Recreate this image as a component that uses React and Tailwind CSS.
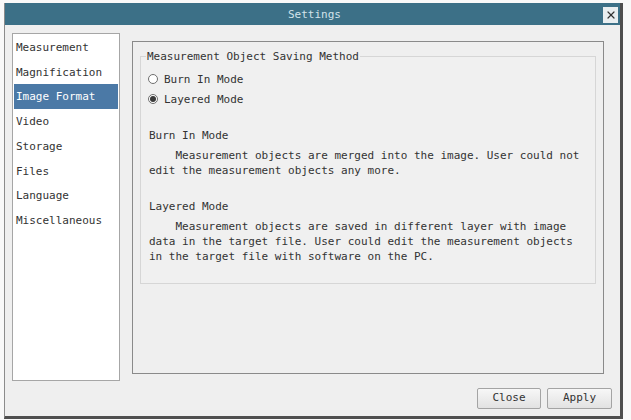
import React from "react";
import { X } from "lucide-react";

const MENU = [
  "Measurement",
  "Magnification",
  "Image Format",
  "Video",
  "Storage",
  "Files",
  "Language",
  "Miscellaneous",
];

function Radio({ checked, label }) {
  return (
    <label className="flex items-center h-[20px] gap-[6px]">
      <span className="w-[10px] h-[10px] rounded-full border border-[#6f6f6f] bg-white flex items-center justify-center">
        {checked && <span className="w-[6px] h-[6px] rounded-full bg-[#3a3a3a]" />}
      </span>
      <span>{label}</span>
    </label>
  );
}

function Btn({ children, w }) {
  return (
    <button
      type="button"
      className={`${w} h-[21px] rounded-[2px] border border-[#a4a4a4] bg-gradient-to-b from-[#f7f7f7] to-[#e2e2e2] text-[#333] text-[11px]`}
    >
      {children}
    </button>
  );
}

export default function App() {
  return (
    <div
      className="w-[631px] h-[420px] bg-[#f9f9f9] pt-[3px] pl-[4px] text-[11px] text-[#333]"
      style={{ fontFamily: '"DejaVu Sans Mono", "Liberation Mono", monospace' }}
    >
      <div className="w-[619px] h-[416px] flex flex-col border-l border-[#8c8c8c] border-r-[3px] border-b-[3px] border-r-[#4f4f4f] border-b-[#4f4f4f]">
        {/* title bar */}
        <div className="relative h-[22px] bg-[#3c7087] flex items-center justify-center">
          <span className="text-[#d3e3ea] text-[11px] pl-[4px] pt-[3px]">Settings</span>
          <div className="absolute right-[2px] top-[4px] w-[15px] h-[16px] bg-[#e9eef0] flex items-center justify-center">
            <X size={12} strokeWidth={2.4} className="text-[#333]" />
          </div>
        </div>

        {/* body */}
        <div className="flex-1 bg-[#efefef] pl-[7px] pt-[8px] flex flex-col">
          <div className="flex items-start">
            {/* menu list */}
            <div className="w-[108px] h-[348px] bg-white border border-[#a6a6a6] p-[1px]">
              {MENU.map((m) => (
                <div
                  key={m}
                  className={`h-[24.7px] flex items-center pl-[2px] pt-[2px] ${
                    m === "Image Format" ? "bg-[#4b79a6] text-white" : ""
                  }`}
                >
                  {m}
                </div>
              ))}
            </div>

            {/* content frame */}
            <div className="ml-[12px] mt-[8px] w-[472px] h-[333px] border border-[#8a8a8a] px-[7px]">
              <fieldset className="mt-[7px] w-[456px] h-[235px] border border-[#d6d6d6] bg-[#f0f0f0] px-[7px] leading-[15px]">
                <legend className="ml-[-2px] px-[1px] leading-[15px]">Measurement Object Saving Method</legend>
                <div className="pt-[5px]">
                  <Radio label="Burn In Mode" />
                  <Radio checked label="Layered Mode" />
                </div>
                <div className="pl-[1px]">
                  <div className="mt-[19px]">Burn In Mode</div>
                  <div className="mt-[5px] whitespace-pre">
                    {"    Measurement objects are merged into the image. User could not\nedit the measurement objects any more."}
                  </div>
                  <div className="mt-[21px]">Layered Mode</div>
                  <div className="mt-[5px] whitespace-pre">
                    {"    Measurement objects are saved in different layer with image\ndata in the target file. User could edit the measurement objects\nin the target file with software on the PC."}
                  </div>
                </div>
              </fieldset>
            </div>
          </div>

          {/* buttons */}
          <div className="mt-[7px] flex justify-end gap-[6px] pr-[8px]">
            <Btn w="w-[64px]">Close</Btn>
            <Btn w="w-[65px]">Apply</Btn>
          </div>
        </div>
      </div>
    </div>
  );
}
